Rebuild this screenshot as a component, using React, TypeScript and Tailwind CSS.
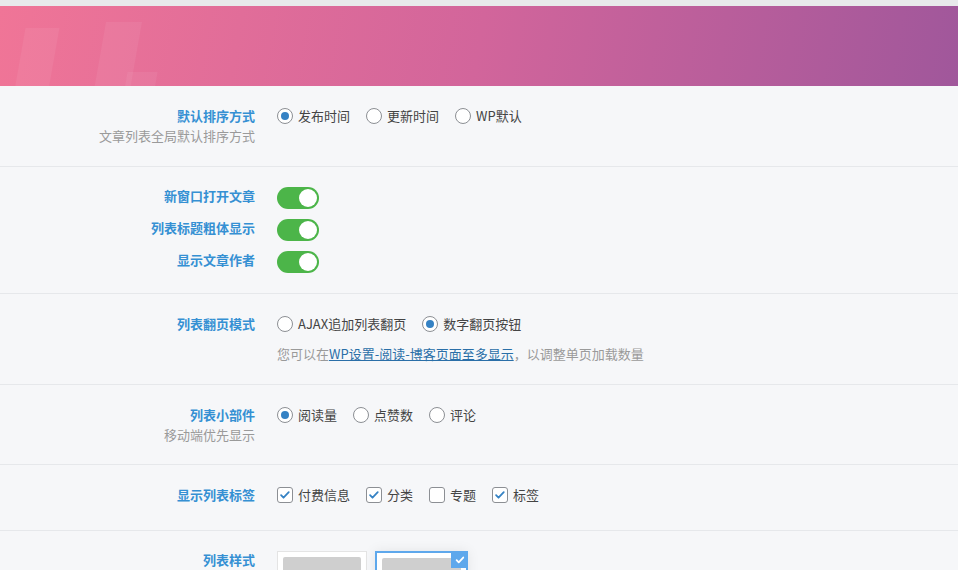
import React from "react";

const SORT = ["发布时间", "更新时间", "WP默认"];
const PAGING = ["AJAX追加列表翻页", "数字翻页按钮"];
const WIDGETS = ["阅读量", "点赞数", "评论"];
const TAGS = [
  { label: "付费信息", on: true },
  { label: "分类", on: true },
  { label: "专题", on: false },
  { label: "标签", on: true },
];
const TOGGLES = ["新窗口打开文章", "列表标题粗体显示", "显示文章作者"];

function Radio({ label, checked }: { label: string; checked?: boolean }) {
  return (
    <label className="flex items-center gap-[5px]">
      <span className="flex h-4 w-4 items-center justify-center rounded-full border border-[#8c8f94] bg-white">
        {checked && <span className="h-2 w-2 rounded-full bg-[#3582c4]" />}
      </span>
      <span>{label}</span>
    </label>
  );
}

function Check({ label, checked }: { label: string; checked?: boolean }) {
  return (
    <label className="flex items-center gap-[5px]">
      <span className="flex h-4 w-4 items-center justify-center rounded-[3px] border border-[#8c8f94] bg-white">
        {checked && (
          <svg viewBox="0 0 16 16" className="h-[14px] w-[14px]">
            <path d="M3.5 8.2l2.8 2.9 6-6.4" fill="none" stroke="#3582c4" strokeWidth="2" strokeLinecap="round" strokeLinejoin="round" />
          </svg>
        )}
      </span>
      <span>{label}</span>
    </label>
  );
}

function Toggle() {
  return (
    <span className="flex h-[22px] w-[42px] items-center justify-end rounded-full bg-[#4cb549] p-[2px]">
      <span className="h-[18px] w-[18px] rounded-full bg-white" />
    </span>
  );
}

function Row({
  label,
  sub,
  children,
  className = "py-5",
}: {
  label: React.ReactNode;
  sub?: string;
  children: React.ReactNode;
  className?: string;
}) {
  return (
    <div className={`grid grid-cols-[255px_1fr] gap-x-[22px] border-b border-[#e6e8eb] ${className}`}>
      <div className="text-right">
        {label}
        {sub && <div className="text-[#9a9a9a]">{sub}</div>}
      </div>
      <div>{children}</div>
    </div>
  );
}

const Label = ({ children }: { children: React.ReactNode }) => (
  <div className="font-bold text-[#3590d3]">{children}</div>
);

export default function App() {
  return (
    <div className="min-h-screen bg-[#f6f7f9] font-['Microsoft_YaHei','Noto_Sans_CJK_SC',sans-serif] text-[13px] leading-5 text-[#444]">
      <div className="h-[6px] bg-[#e8e9eb]" />
      <div className="relative h-[80px] overflow-hidden bg-[linear-gradient(100deg,#f07597,#d2659b_50%,#a0579b)]">
        {/* faint slanted watermark strokes */}
        <div className="absolute left-[20px] top-[22px] h-[62px] w-[34px] -skew-x-[10deg] bg-white/[0.06]" />
        <div className="absolute left-[100px] top-[16px] h-[68px] w-[36px] -skew-x-[10deg] bg-white/[0.06]" />
        <div className="absolute left-[126px] top-[66px] h-[18px] w-[30px] -skew-x-[10deg] bg-white/[0.06]" />
      </div>

      <Row label={<Label>默认排序方式</Label>} sub="文章列表全局默认排序方式">
        <div className="flex gap-4">
          {SORT.map((s, i) => (
            <Radio key={s} label={s} checked={i === 0} />
          ))}
        </div>
      </Row>

      <Row
        label={
          <div className="-mt-[1px] flex flex-col gap-[12px]">
            {TOGGLES.map((t) => (
              <Label key={t}>{t}</Label>
            ))}
          </div>
        }
      >
        <div className="flex flex-col gap-[10px]">
          {TOGGLES.map((t) => (
            <Toggle key={t} />
          ))}
        </div>
      </Row>

      <Row label={<Label>列表翻页模式</Label>}>
        <div className="flex gap-4">
          {PAGING.map((s, i) => (
            <Radio key={s} label={s} checked={i === 1} />
          ))}
        </div>
        <p className="mt-[10px] text-[#9a9a9a]">
          您可以在
          <a href="#" className="text-[#2a6fa8] underline">
            WP设置-阅读-博客页面至多显示
          </a>
          ，以调整单页加载数量
        </p>
      </Row>

      <Row label={<Label>列表小部件</Label>} sub="移动端优先显示" className="pt-5 pb-[19px]">
        <div className="flex gap-4">
          {WIDGETS.map((s, i) => (
            <Radio key={s} label={s} checked={i === 0} />
          ))}
        </div>
      </Row>

      <Row label={<Label>显示列表标签</Label>} className="pt-5 pb-[25px]">
        <div className="flex gap-4">
          {TAGS.map((t) => (
            <Check key={t.label} label={t.label} checked={t.on} />
          ))}
        </div>
      </Row>

      <Row label={<Label>列表样式</Label>} className="pt-[19px] pb-5 border-b-0">
        <div className="flex gap-2 pt-[1px]">
          <div className="h-[70px] w-[90px] border border-[#e4e4e4] bg-white p-[5px]">
            <div className="h-full rounded-t-[2px] bg-[#cfcfcf]" />
          </div>
          <div className="relative h-[70px] w-[93px] border-2 border-[#5ea8ec] bg-white p-[5px] shadow-[0_0_12px_rgba(0,0,0,0.08)]">
            <div className="h-full rounded-t-[2px] bg-[#cfcfcf]" />
            <span className="absolute -right-[2px] -top-[2px] flex h-[17px] w-[17px] items-center justify-center bg-[#5ea8ec]">
              <svg viewBox="0 0 16 16" className="h-3 w-3">
                <path d="M3.5 8.2l2.8 2.9 6-6.4" fill="none" stroke="#fff" strokeWidth="2.4" strokeLinecap="round" strokeLinejoin="round" />
              </svg>
            </span>
          </div>
        </div>
      </Row>
    </div>
  );
}
